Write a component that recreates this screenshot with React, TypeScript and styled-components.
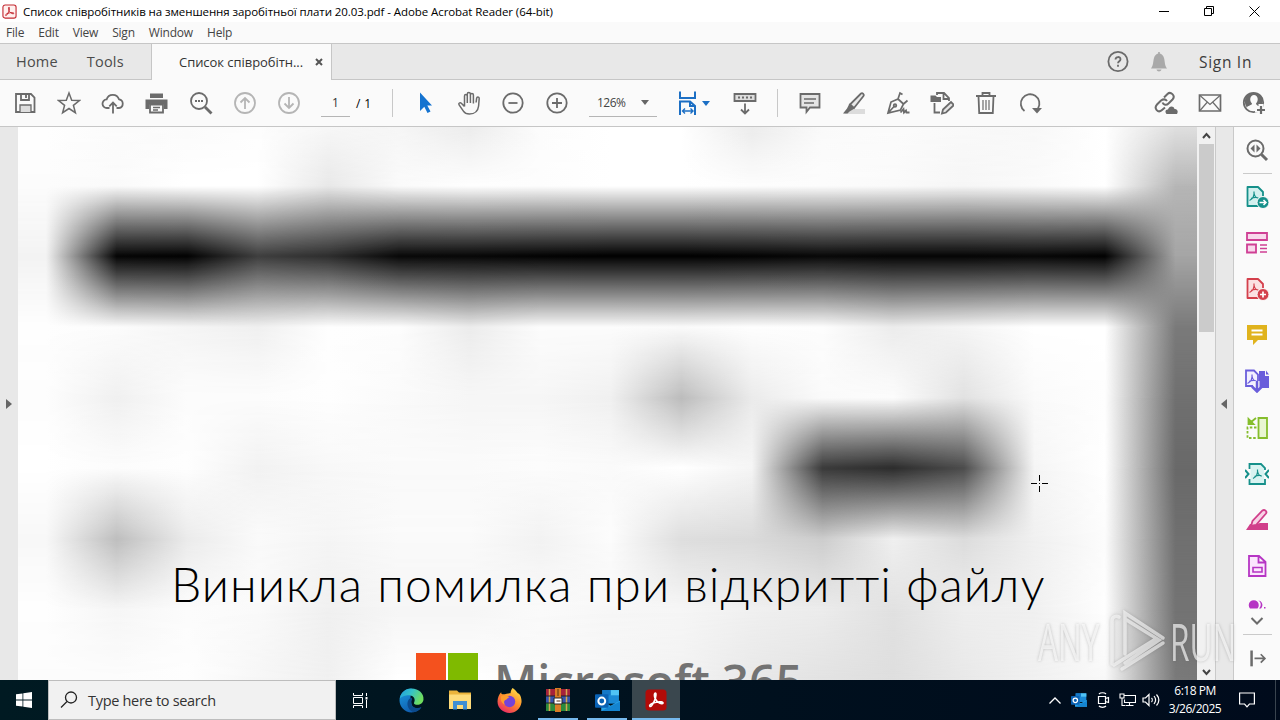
import React, { FC, ReactNode } from "react";

import styled, { createGlobalStyle } from "styled-components";

const GRAY = "#6b6b6b";

/* Brightness samples of the blurred scan, one list per row */
const SCAN_STEP_X = 70.6;
const SCAN_STEP_Y = 70.7;
const SCAN_FIRST_X = 28;
const SCAN_ROWS = [
  [255, 252, 250, 253, 250, 245, 232, 252, 255, 255, 232, 250, 252, 250, 248, 255, 232, 230],
  [252, 250, 255, 255, 232, 250, 254, 253, 255, 255, 253, 252, 250, 246, 250, 255, 182, 180],
  [243, 5, 2, 62, 45, 8, 7, 3, 0, 0, 3, 8, 5, 5, 7, 2, 165, 165],
  [254, 252, 245, 240, 254, 253, 236, 252, 252, 250, 254, 253, 236, 245, 255, 255, 122, 122],
  [253, 240, 252, 252, 254, 250, 246, 246, 240, 188, 235, 250, 252, 225, 250, 254, 112, 112],
  [255, 252, 254, 242, 248, 250, 250, 252, 250, 255, 245, 58, 44, 76, 245, 255, 105, 105],
  [248, 190, 235, 250, 245, 250, 250, 242, 252, 222, 218, 205, 240, 220, 240, 252, 112, 112],
  [254, 246, 252, 250, 240, 246, 246, 250, 247, 246, 240, 236, 225, 238, 240, 254, 115, 115],
  [252, 252, 254, 246, 240, 255, 255, 250, 246, 242, 232, 226, 222, 232, 240, 248, 122, 115],
];

const rowGradient = (row: number[]) =>
  `linear-gradient(90deg, ${row
    .map((v, i) => `rgb(${v},${v},${v}) ${SCAN_FIRST_X + i * SCAN_STEP_X}px`)
    .join(", ")})`;

interface IconProps {
  size?: number;
  color?: string;
  children: ReactNode;
}

const Icon: FC<IconProps> = ({ size = 24, color = GRAY, children }) => (
  <svg
    width={size}
    height={size}
    viewBox="0 0 24 24"
    fill="none"
    stroke={color}
    strokeWidth="1.8"
  >
    {children}
  </svg>
);

const SaveIcon = () => (
  <Icon>
    <path d="M3 3h15l3.500 3.500V21H3z" />
    <path d="M8 3v6h8V3M13 4v3" />
    <path d="M7 21v-7h11v7" fill="#ddd" strokeWidth="1.300" />
  </Icon>
);

const StarIcon = () => (
  <Icon>
    <path d="M12 2l2.700 7.200 7.700.3-6 4.800 2 7.400-6.400-4.200-6.400 4.200 2-7.400-6-4.800 7.700-.3z" strokeWidth="1.500" />
  </Icon>
);

const CloudIcon = () => (
  <Icon>
    <path d="M8.500 17H6a4.300 4.300 0 0 1-.4-8.600A6.500 6.500 0 0 1 18 8.300 4.400 4.400 0 0 1 18 17h-2.500" />
    <path d="M12 22.500V12M8.300 15.300L12 11.600l3.700 3.700" />
  </Icon>
);

const PrintIcon = () => (
  <Icon>
    <path d="M5 2.500h13V7H5z" fill={GRAY} stroke="none" />
    <path d="M.5 8.500h22V18H19v-4.500H4V18H.5z" fill={GRAY} stroke="none" />
    <path d="M5 13.500h13v8H5z" />
    <path d="M8 16.500h7M8 19h5" strokeWidth="1.300" />
  </Icon>
);

const FindIcon = () => (
  <Icon>
    <circle cx="10" cy="10" r="8" />
    <path d="M16 16l6.500 6.500" strokeWidth="2.800" />
    <path d="M6 10h2M9 10h2M12 10h2" strokeWidth="2" />
  </Icon>
);

const ArrowCircleIcon: FC<{ down?: boolean }> = ({ down }) => (
  <Icon color="#b5b5b5">
    <circle cx="12" cy="12" r="10" />
    <path d={down ? "M12 6v11M7.500 12.500L12 17l4.500-4.500" : "M12 18V7M7.500 11.500L12 7l4.500 4.500"} />
  </Icon>
);

const PointerIcon = () => (
  <Icon>
    <path d="M7 1.500v18.500l4.300-4.300 3.200 6.300 3-1.500-3.200-6.100H19z" fill="#1473d0" stroke="none" />
  </Icon>
);

const HandIcon = () => (
  <Icon>
    <path
      d="M7.500 15.500L4.300 12.200c-1.300-1.300-3.200.2-2.200 1.700l4.300 6.200c1.200 1.800 3 2.900 6 2.900 6 0 8.600-3 9.200-8l.6-7.500c.1-2-2.400-2.100-2.600-.2l-.5 4.200M7.500 15.500V5c0-2 2.700-2 2.800 0v7V3c0-2 3-2 3.100 0v9-8c0-2 3-2 3 0v8.500"
      strokeWidth="1.500"
    />
  </Icon>
);

const ZoomIcon: FC<{ plus?: boolean }> = ({ plus }) => (
  <Icon>
    <circle cx="12" cy="12" r="9.700" />
    <path d={plus ? "M7 12h10M12 7v10" : "M7.500 12h9"} />
  </Icon>
);

const FitIcon = () => (
  <Icon color="#1c6fc4">
    <path d="M3 .5V7h15V.5M3 24V10.500h10L18 15v9M13 10.500V15h5" strokeWidth="2" />
    <path d="M5.500 20h10.500M8 17.500L5.500 20 8 22.500M13.500 17.500L16 20l-2.500 2.500" strokeWidth="1.400" />
  </Icon>
);

const ScrollModeIcon = () => (
  <Icon>
    <path d="M1.500 3h21v7h-21z" fill="#ddd" />
    <path d="M5 6.500h14" strokeDasharray="2 2" strokeWidth="2" />
    <path d="M12 12.500v10M8 18.500l4 4 4-4" />
  </Icon>
);

const CommentIcon = () => (
  <Icon>
    <path d="M2.500 3h19v13.500H12L8.500 21v-4.500h-6z" fill="#e4e4e4" />
    <path d="M6 8h12M6 12h10" strokeWidth="1.400" />
  </Icon>
);

const HighlightIcon = () => (
  <Icon>
    <path d="M6 18h17v5H2z" fill="#dcdcdc" stroke="none" />
    <path d="M19 2.500c1.500-1 3.700 1 2.500 2.500L12 17l-4-3.500z" fill="#e8e8e8" />
    <path d="M7.500 12.500l-2.500 5L1 22.500h4.500l2-2 5-3z" fill={GRAY} stroke="none" />
  </Icon>
);

const SignIcon = () => (
  <Icon>
    <path d="M2 22l3-11 7-3 5.500 5-3 6zM2.500 21.500l6-6.500M12 8l2-6 2.500 1.500M12 8l5.500 5 4-3.500" strokeWidth="1.700" />
    <circle cx="9" cy="14.500" r="1.300" />
    <path d="M14.500 21.500l3-3.500.5 3.500 2-2 .5 2h3" />
  </Icon>
);

const EditPageIcon = () => (
  <Icon>
    <path d="M7 4V2h7l5 5v3M13.500 2v6H19M4.500 12v9.500H10" />
    <path d="M.5 4.500h5l1.500 1.500h4V11H.500z" fill={GRAY} stroke="none" />
    <path d="M12 22.500l1-4 8-7.500 3 3-8 7.500z" fill="#e4e4e4" />
  </Icon>
);

const TrashIcon = () => (
  <Icon>
    <path d="M2 5h20M8.500 5V2h7v3M4.500 5l.7 17h13.600l.7-17" />
    <path d="M9 9v10M12 9v10M15 9v10" strokeWidth="1.200" />
  </Icon>
);

const RotateIcon = () => (
  <Icon>
    <path d="M6.500 20A9.300 9.300 0 1 1 20 17.500" />
    <path d="M14 17l10 0-5 5.500z" fill={GRAY} stroke="none" />
  </Icon>
);

const LinkIcon = () => (
  <Icon>
    <path d="M10 6.500l3.500-3.500c3-3 8.500 1.500 5 5.500l-4 4c-2 2-5 1.500-6-1M13 10c-1.500-2-4-2-6-.5l-4 4c-3.500 4 1 9 5 5.500l3-2.500" strokeWidth="2" />
    <path d="M12.500 23c-2.500-3 0-5 1.500-4.500 1-3.500 5.500-4 6.500-.5 3-.5 4 3 2.500 5z" fill={GRAY} stroke="none" />
  </Icon>
);

const MailIcon = () => (
  <Icon>
    <path d="M1.500 4h21v16h-21z" strokeWidth="1.700" />
    <path d="M2 4.500l10 9 10-9M2 19.500l7-8M22 19.500l-7-8" strokeWidth="1.200" />
  </Icon>
);

const AddUserIcon = () => (
  <Icon>
    <circle cx="11.500" cy="11.500" r="9.700" />
    <path d="M4 5.500C8 .5 17 1 20.500 7v8H16c-1-1.500-2-1-2-2.500 3-3 2-8.500-2-8.500s-5 5.500-2 8.500c0 2-4.500 2-5 4-2-2-3-7-1-11z" fill={GRAY} stroke="none" />
    <path d="M19 13v12M13 19h12" stroke="#fafafa" strokeWidth="5" />
    <path d="M19 15v8M15 19h8" strokeWidth="2.200" />
  </Icon>
);

const PdfMark: FC<{ color: string; x?: number; y?: number }> = ({ color, x = 0, y = 0 }) => (
  <path
    transform={`translate(${x} ${y})`}
    d="M4.500 15.500c3-1.500 5-5 4.500-9M9 8c.5 3 2 5 4.500 5M6 13.500c2-1 4-1.300 6.500-1"
    stroke={color}
    strokeWidth="1.200"
  />
);

const PagePdf: FC<{ color: string; fill: string; children: ReactNode }> = ({ color, fill, children }) => (
  <Icon color={color}>
    <path d="M2.500 2h10.500L18 7v14H2.500z" fill={fill} strokeLinejoin="round" />
    <PdfMark color={color} />
    <circle cx="18" cy="17.500" r="6" fill={color} stroke="#fafafa" strokeWidth="1" />
    {children}
  </Icon>
);

const sideTools: ReactNode[] = [
  <PagePdf color="#15908a" fill="#d2f0ee">
    <path d="M14.500 17.500h6M18.500 15l2.500 2.500-2.500 2.500" stroke="#fff" strokeWidth="1.500" />
  </PagePdf>,
  <Icon color="#cf3f94">
    <path d="M2 2h20v7H2zM2 13.500h9v8H2z" fill="#f8d8ec" />
    <path d="M15 14h7M15 17.500h7M15 21h7" strokeWidth="1.400" />
  </Icon>,
  <PagePdf color="#d4404c" fill="#fbe0e2">
    <path d="M15 17.500h6M18 14.500v6" stroke="#fff" strokeWidth="1.700" />
  </PagePdf>,
  <Icon color="#e0b31d">
    <path d="M2 2h20v15H13l-5 5v-5H2z" fill="#e0b31d" stroke="none" />
    <path d="M6.500 7.500h11M6.500 11.500h11" stroke="#fff" strokeWidth="1.800" />
  </Icon>,
  <Icon color="#6a5edb">
    <path d="M14 2h6v5h4v12H14z" fill="#6a5edb" stroke="none" />
    <path d="M21 1.500l3 4h-3z" fill="#6a5edb" stroke="none" />
    <path d="M8 17H1V1.500h8l4 4V13" fill="#f2f0ff" />
    <PdfMark color="#6a5edb" x={-2} y={-1} />
    <path d="M12 12v10" stroke="#fafafa" strokeWidth="5" />
    <path d="M12 12v10M7 17.500l5 5 5-5" strokeWidth="2.500" />
  </Icon>,
  <Icon color="#85bd2c">
    <path d="M13.500 2h8.500v20h-8.500z" fill="#e9f6d2" />
    <path d="M11.500 11.500H2.500V22h9" strokeDasharray="2.500 1.700" />
    <path d="M3.500 3v5h5zM5.500 6.500L11 2" fill="#85bd2c" />
  </Icon>,
  <Icon color="#15908a">
    <path d="M5.500 2.500h10L19 6v15H5.500z" fill="#d8f3f1" stroke="none" />
    <path d="M4.500 7V2H16l4 4v2M4.500 17v5H20v-5" />
    <path d="M0 8l3.500 4L0 16M24 8l-3.500 4 3.500 4" strokeWidth="2" />
    <PdfMark color="#15908a" x={3.500} y={1} />
  </Icon>,
  <Icon color="#d13f8b">
    <path d="M1 22l4-6h6l4-1h8v7z" fill="#d13f8b" stroke="none" />
    <path d="M17.500 2.500c2-1.500 5 1 3.500 3L11 17l-5 1 1.500-5z" fill="#f8d3e6" />
  </Icon>,
  <Icon color="#b635c4">
    <path d="M4 2h10l6.500 6v14H4zM13.500 2v6.500h7" fill="#fbe6fd" />
    <path d="M8 13.500h9v4.500H8z" strokeWidth="1.600" />
  </Icon>,
];

const WinrarIcon = () => (
  <svg width="24" height="24" viewBox="0 0 24 24">
    <path d="M0 1h24v7H0z" fill="#a5223b" />
    <path d="M0 8h24v7H0z" fill="#3654ae" />
    <path d="M0 15h24v8H0z" fill="#2b8a3c" />
    <path d="M3.500 1v22M20.500 1v22" stroke="#d8a850" strokeWidth="1.500" />
    <path d="M0 8h24M0 15h24" stroke="#222" />
    <path d="M9 0h6v24H9z" fill="#d97c26" />
    <path d="M8 10h8v6H8z" fill="#fff" stroke="#222" />
    <path d="M10.500 13h4M12 1v7" stroke="#553010" />
  </svg>
);

const OutlookIcon: FC<{ size: number }> = ({ size }) => (
  <svg width={size} height={size} viewBox="0 0 24 24">
    <path d="M7 2h16v13H7z" fill="#1b8ad6" />
    <path d="M15 2h8v5h-8z" fill="#50c3f5" />
    <path d="M7 2h8v5H7z" fill="#1478c7" />
    <path d="M6 12l9 5 9-5v10H6z" fill="#2ba4e8" />
    <path d="M6 22l18-9v9z" fill="#1484d0" />
    <rect x="0" y="6" width="13" height="13" rx="1" fill="#0a62b4" />
    <circle cx="6.500" cy="12.500" r="3.300" fill="none" stroke="#fff" strokeWidth="1.900" />
  </svg>
);

const AcrobatIcon: FC<{ size: number; light?: boolean }> = ({ size, light }) => (
  <svg width={size} height={size} viewBox="0 0 24 24" fill="none">
    <rect
      x="1.500"
      y="1.500"
      width="21"
      height="21"
      rx="3.500"
      fill={light ? "#fff0ee" : "#b30b08"}
      stroke={light ? "#c42a32" : "none"}
      strokeWidth="1.800"
    />
    <path
      d="M6 18.500c-1.500-1.500 2-3.500 6-4.300 4-.9 7.500-.3 7 1-.7 1.700-6-.7-7.800-4.600-1.200-2.800-1-5.600 0-5.600 1.200 0 1 3.500-.7 7.500-1.500 3.500-3.300 6.500-4.500 6z"
      stroke={light ? "#c42a32" : "#fff"}
      strokeWidth="1.600"
    />
  </svg>
);

const EdgeIcon = () => (
  <svg width="25" height="25" viewBox="0 0 24 24">
    <defs>
      <linearGradient id="edgeTop" x1="0" y1="0" x2="1" y2="0.400">
        <stop offset="0" stopColor="#1f9fe0" />
        <stop offset="0.500" stopColor="#35c1c8" />
        <stop offset="1" stopColor="#6fdd5f" />
      </linearGradient>
      <linearGradient id="edgeLow" x1="0" y1="0" x2="0.500" y2="1">
        <stop offset="0" stopColor="#1b9de2" />
        <stop offset="1" stopColor="#0f5cae" />
      </linearGradient>
    </defs>
    <path d="M12 .5C5 .5.500 6 .500 12S5.500 23.500 12 23.500c4 0 7.500-2 9.500-5-4 2-9 .5-9.500-3.500L11 9z" fill="url(#edgeLow)" />
    <path d="M.7 10C2 3.500 7 .5 12 .500c7 0 12 5 11.500 10.500-.3 4-4 5.500-7 5-3-.5-2-2-1.500-3.500C15.500 8.500 12 6.500 8 7c-3.500.4-6 1.800-7.300 3z" fill="url(#edgeTop)" />
    <path d="M11 9.500c-4.500 2.500-4 11 3 13.800 3-.5 5.500-2 7.500-4.800-3 1.500-8 1-9.500-2.500-1.200-3 1-4 .5-6 0-.6-1-.8-1.500-.5z" fill="#0c4a8c" />
  </svg>
);

const FolderIcon = () => (
  <svg width="24" height="24" viewBox="0 0 24 24">
    <path d="M1 2.500h8l2 2h12V21H1z" fill="#eab33b" />
    <path d="M1 6.500h22V21H1z" fill="#fddb7a" />
    <path d="M5 13h14v8.500h-4V17H9v4.500H5z" fill="#3f8fd4" />
  </svg>
);

const FirefoxIcon = () => (
  <svg width="25" height="25" viewBox="0 0 24 24">
    <defs>
      <linearGradient id="fox" x1="0.800" y1="0" x2="0.200" y2="1">
        <stop offset="0" stopColor="#ffe14a" />
        <stop offset="0.500" stopColor="#ff8a2a" />
        <stop offset="1" stopColor="#e8226a" />
      </linearGradient>
    </defs>
    <path d="M15 0c4 3 4 4 5 5 2 0 4 5 3.500 9C22.500 20 18 24 12 24S.5 19.500.5 13C.5 9 2 6 4 4c0 2 1 2 2 2 2 0 5-1 7-1 0-2 1-4 2-5z" fill="url(#fox)" />
    <circle cx="12" cy="13" r="5.500" fill="#7543d8" />
    <path d="M4 8c3-1.500 6-.5 8 1-2 0-2 2-4 2.500C6.500 12 6.500 14 7.500 16 4 14.500 3 11 4 8z" fill="#ff9c2c" />
  </svg>
);

const WindowsIcon = () => (
  <svg width="16" height="16" viewBox="0 0 16 16" fill="#fff">
    <path d="M0 2.300l6.500-.9v6.100H0zM7.300 1.300L16 0v7.500H7.300zM0 8.400h6.500v6.200L0 13.700zM7.300 8.400H16V16l-8.700-1.300z" />
  </svg>
);

const Watermark = () => (
  <WatermarkBox>
    <WatermarkText $width={66}>ANY</WatermarkText>
    <svg width="58" height="66" viewBox="0 0 58 66" fill="none" stroke="rgba(255,255,255,.6)" strokeWidth="3.500">
      <path d="M17 46V5l38 25M55 35L14 61M4 56V13c0-4 4-6 7-4M17 11l34 21-34 23M6 57l40-25" strokeLinecap="round" />
    </svg>
    <WatermarkText $width={62}>RUN</WatermarkText>
  </WatermarkBox>
);

const App: FC = () => (
  <Screen>
    <GlobalStyle />
    <TitleBar>
      <AcrobatIcon size={15} light />
      <WindowTitle>
        Список співробітників на зменшення заробітньої плати 20.03.pdf - Adobe Acrobat Reader (64-bit)
      </WindowTitle>
      <WindowButtons>
        <svg width="11" height="11" stroke="#000"><path d="M0 5.500h10" /></svg>
        <svg width="11" height="11" stroke="#000" fill="none"><path d="M.5 2.500h7v7h-7zM2.500 2.500v-2h7v7h-2" /></svg>
        <svg width="11" height="11" stroke="#000"><path d="M.5.500l10 10M10.500.500l-10 10" /></svg>
      </WindowButtons>
    </TitleBar>

    <MenuBar>
      {["File", "Edit", "View", "Sign", "Window", "Help"].map((item) => (
        <span key={item}>{item}</span>
      ))}
    </MenuBar>

    <TabBar>
      <HomeTabs>
        <span>Home</span>
        <span>Tools</span>
      </HomeTabs>
      <DocumentTab>
        <span>Список співробітн...</span>
        <svg width="8" height="8" stroke="#555" strokeWidth="2"><path d="M1 1l6 6M7 1L1 7" /></svg>
      </DocumentTab>
      <Account>
        <Icon>
          <circle cx="12" cy="11.500" r="9.600" />
          <path d="M9.500 9.500c0-3.300 5-3.200 5-.3 0 2-2.500 2-2.500 4.100M12 14.800v2" />
        </Icon>
        <Icon color="none">
          <path d="M4 18.500c2.500-3 2-7 3-10.500.6-2.500 2.500-4 4.200-4.500V2h1.600v1.500c1.700.5 3.600 2 4.200 4.500 1 3.500.5 7.500 3 10.500zM9.500 19.500h5c-.5 2.500-4.500 2.500-5 0z" fill="#a9a9a9" />
        </Icon>
        <SignIn>Sign In</SignIn>
      </Account>
    </TabBar>

    <Toolbar>
      <ToolGroup>
        <Tool><SaveIcon /></Tool>
        <Tool><StarIcon /></Tool>
        <Tool><CloudIcon /></Tool>
        <Tool><PrintIcon /></Tool>
        <Tool><FindIcon /></Tool>
        <Tool><ArrowCircleIcon /></Tool>
        <Tool><ArrowCircleIcon down /></Tool>
      </ToolGroup>
      <PageInput>1</PageInput>
      <PageTotal>/ 1</PageTotal>
      <ToolDivider />
      <ToolGroup>
        <Tool><PointerIcon /></Tool>
        <Tool><HandIcon /></Tool>
        <Tool><ZoomIcon /></Tool>
        <Tool><ZoomIcon plus /></Tool>
      </ToolGroup>
      <ZoomSelect>
        126%
        <Caret />
      </ZoomSelect>
      <FitTool>
        <FitIcon />
        <Caret $color="#1c6fc4" />
      </FitTool>
      <Tool><ScrollModeIcon /></Tool>
      <ToolDivider $wide />
      <ToolGroup>
        <Tool><CommentIcon /></Tool>
        <Tool><HighlightIcon /></Tool>
        <Tool><SignIcon /></Tool>
        <Tool><EditPageIcon /></Tool>
        <Tool><TrashIcon /></Tool>
        <Tool><RotateIcon /></Tool>
      </ToolGroup>
      <ShareGroup>
        <Tool><LinkIcon /></Tool>
        <Tool><MailIcon /></Tool>
        <Tool><AddUserIcon /></Tool>
      </ShareGroup>
    </Toolbar>

    <Workspace>
      <LeftGutter>
        <svg width="6" height="12" fill="#666"><path d="M0 1l6 5-6 5z" /></svg>
      </LeftGutter>
      <Page>
        <Scan>
          {SCAN_ROWS.slice(0, -1).map((row, i) => (
            <ScanBand key={i} $from={rowGradient(row)} $to={rowGradient(SCAN_ROWS[i + 1])} />
          ))}
        </Scan>
        <PageContent>
          <ErrorTitle>Виникла помилка при відкритті файлу</ErrorTitle>
          <Brand>
            <BrandSquares>
              <Square $color="#f4511e" />
              <Square $color="#7fba00" />
            </BrandSquares>
            <BrandName>Microsoft 365</BrandName>
          </Brand>
        </PageContent>
        <Crosshair width="19" height="19" viewBox="0 0 19 19" stroke="#000">
          <path d="M1 9.500h6M12 9.500h6M9.500 1v6M9.500 12v6M9 9.500h1" />
        </Crosshair>
      </Page>
      <Scrollbar>
        <svg width="9" height="17" stroke="#444" strokeWidth="2" fill="none"><path d="M1 11l3.500-4L8 11" /></svg>
        <Thumb />
        <svg width="9" height="17" stroke="#444" strokeWidth="2" fill="none"><path d="M1 7l3.500 4L8 7" /></svg>
      </Scrollbar>
      <RightGutter>
        <svg width="6" height="12" fill="#666"><path d="M6 1L0 6l6 5z" /></svg>
      </RightGutter>
      <ToolsPane>
        <PaneTop>
          <Icon>
            <circle cx="10.500" cy="10.500" r="8" strokeWidth="2" />
            <path d="M16.500 16.500l5.500 5.500" strokeWidth="3" />
            <path d="M9.500 6.500v8L5.500 10.500zM11.500 6.500v8l4-4z" fill={GRAY} stroke="none" />
          </Icon>
        </PaneTop>
        <PaneLine />
        <PaneTools>
          {sideTools.map((tool, i) => (
            <PaneTool key={i}>{tool}</PaneTool>
          ))}
        </PaneTools>
        <PaneMore>
          <svg width="24" height="9" viewBox="0 0 24 9" fill="#b635c4">
            <path d="M5 8.500a5 5 0 1 1 7.500 0z" />
            <path d="M13 .5c3.500 1 3.500 6 1 8h2c3-3 1-8-3-8zM19 7h1.500v1.500H19z" />
          </svg>
          <svg width="14" height="8" fill="none" stroke={GRAY} strokeWidth="2"><path d="M1.500 1L7 6.500 12.500 1" /></svg>
        </PaneMore>
        <PaneLine $last />
        <Icon size={20}>
          <path d="M5.500 3v19" strokeWidth="3" />
          <path d="M9 12.500h12M16.500 7.500l5 5-5 5" strokeWidth="2" />
        </Icon>
      </ToolsPane>
      <Watermark />
    </Workspace>

    <Taskbar>
      <Start><WindowsIcon /></Start>
      <Search>
        <svg width="18" height="18" fill="none" stroke="#222" strokeWidth="1.300">
          <circle cx="11" cy="6.500" r="5.500" />
          <path d="M7 10.500L1 16.500" />
        </svg>
        <span>Type here to search</span>
      </Search>
      <TaskItem>
        <svg width="17" height="17" fill="none" stroke="#fff">
          <path d="M1.500 1v2.500h9V1M1.500 16v-2.500h9V16M1.500 5.500h9v6h-9zM14.500 1v3M14.500 8v8" />
          <path d="M13.500 5h2v2.500h-2z" fill="#fff" stroke="none" />
        </svg>
      </TaskItem>
      <PinnedApps>
        <TaskItem><EdgeIcon /></TaskItem>
        <TaskItem><FolderIcon /></TaskItem>
        <TaskItem><FirefoxIcon /></TaskItem>
        <TaskItem $line={40}><WinrarIcon /></TaskItem>
        <TaskItem $line={40}><OutlookIcon size={25} /></TaskItem>
        <TaskItem $line={48} $active><AcrobatIcon size={24} /></TaskItem>
      </PinnedApps>
      <Tray>
        <TrayItem>
          <svg width="12" height="7" fill="none" stroke="#fff" strokeWidth="1.300"><path d="M.5 6.500L6 1l5.500 5.500" /></svg>
        </TrayItem>
        <TrayItem><OutlookIcon size={16} /></TrayItem>
        <TrayItem>
          <svg width="14" height="18" viewBox="0 0 14 18" fill="none" stroke="#fff" strokeWidth="1.200">
            <path d="M2.500 5.500h7v7h-7zM9.500 7.500l3-1v5l-3-1M3 3c1.500-1.700 5.500-1.700 7 0M3 15c1.500 1.700 5.500 1.700 7 0" />
          </svg>
        </TrayItem>
        <TrayItem>
          <svg width="17" height="16" fill="none" stroke="#fff" strokeWidth="1.100">
            <path d="M5.500 3.500h11v7h-11v-3M10.500 10.500v3M6.500 13.500h8M1 2h4v4H1zM3 6v7.500h3" />
          </svg>
        </TrayItem>
        <TrayItem>
          <svg width="18" height="16" fill="none" stroke="#fff" strokeWidth="1.200">
            <path d="M1 6h2.500L7 2.500v11L3.500 10H1zM9.500 6c1 1 1 3 0 4M12 4c2 2.500 2 5.500 0 8M14.500 2.500c3 3.500 3 7.500 0 11" />
          </svg>
        </TrayItem>
      </Tray>
      <Clock>
        <span>6:18 PM</span>
        <span>3/26/2025</span>
      </Clock>
      <Notifications>
        <svg width="16" height="16" fill="none" stroke="#fff" strokeWidth="1.200"><path d="M.6 1h14.800v11h-5L8 14.800 5.600 12h-5z" /></svg>
      </Notifications>
    </Taskbar>
  </Screen>
);

export default App;

const GlobalStyle = createGlobalStyle`
  * {
    box-sizing: border-box;
  }

  body {
    margin: 0;
    overflow: hidden;
    font-family: "Open Sans", "Noto Sans", sans-serif;
  }

  svg {
    display: block;
    flex: none;
  }
`;

const Screen = styled.div`
  display: flex;
  flex-direction: column;
  width: 1280px;
  height: 720px;
  overflow: hidden;
  background: #fafafa;
  white-space: nowrap;
`;

const TitleBar = styled.div`
  display: flex;
  align-items: center;
  height: 22px;
  padding-left: 2px;
  background: #fff;
`;

const WindowTitle = styled.span`
  margin-left: 6px;
  font-size: 11.5px;
  letter-spacing: -0.08px;
  color: #000;
`;

const WindowButtons = styled.div`
  display: flex;
  gap: 34px;
  margin-left: auto;
  padding-right: 20px;
`;

const MenuBar = styled.div`
  display: flex;
  align-items: center;
  gap: 14px;
  height: 21px;
  padding-left: 6px;
  font-size: 12px;
  letter-spacing: -0.2px;
  color: #444;
`;

const TabBar = styled.div`
  display: flex;
  height: 37px;
  background: #e8e8e8;
  border-top: 1px solid #c6c6c6;
  border-bottom: 1px solid #c6c6c6;
`;

const HomeTabs = styled.div`
  display: flex;
  align-items: center;
  gap: 29px;
  width: 151px;
  padding-left: 16px;
  font-size: 14.5px;
  letter-spacing: 0.2px;
  color: #4b4b4b;
`;

const DocumentTab = styled.div`
  display: flex;
  align-items: center;
  justify-content: space-between;
  width: 181px;
  height: 36px;
  padding: 0 8px 0 27px;
  font-size: 13px;
  letter-spacing: -0.05px;
  color: #333;
  background: #fafafa;
  border-left: 1px solid #c6c6c6;
  border-right: 1px solid #c6c6c6;
`;

const Account = styled.div`
  display: flex;
  align-items: center;
  gap: 17px;
  margin-left: auto;
  padding-right: 26px;
`;

const SignIn = styled.span`
  width: 55px;
  margin-left: 11px;
  font-size: 15.5px;
  letter-spacing: 0.7px;
  color: #3c3c3c;
`;

const Toolbar = styled.div`
  display: flex;
  align-items: center;
  height: 47px;
  padding: 0 4px 0 3px;
  font-size: 12px;
  border-bottom: 1px solid #c6c6c6;
`;

const ToolGroup = styled.div`
  display: flex;
`;

const ShareGroup = styled(ToolGroup)`
  margin-left: auto;
`;

const Tool = styled.div`
  display: flex;
  justify-content: center;
  width: 44px;
`;

const PageInput = styled.div`
  width: 29px;
  height: 27px;
  margin-left: 10px;
  line-height: 26px;
  text-align: center;
  color: #333;
  border-bottom: 1px solid #b5b5b5;
`;

const PageTotal = styled.span`
  width: 36px;
  padding-left: 6px;
  letter-spacing: 0.4px;
`;

const ToolDivider = styled.div<{ $wide?: boolean }>`
  width: 1px;
  height: 28px;
  margin: 0 10px 0 ${({ $wide }) => ($wide ? 10 : 6)}px;
  background: #c8c8c8;
`;

const Caret = styled.i<{ $color?: string }>`
  border: 4px solid transparent;
  border-top: 5px solid ${({ $color }) => $color || "#666"};
  border-bottom: 0;
`;

const ZoomSelect = styled.div`
  display: flex;
  align-items: center;
  justify-content: space-between;
  width: 68px;
  height: 27px;
  margin-left: 10px;
  padding: 0 8px;
  letter-spacing: -0.5px;
  color: #444;
  border-bottom: 1px solid #b5b5b5;
`;

const FitTool = styled.div`
  display: flex;
  align-items: center;
  gap: 1px;
  width: 46px;
  margin-left: 20px;
`;

const Workspace = styled.div`
  position: relative;
  display: flex;
  height: 553px;
`;

const LeftGutter = styled.div`
  display: flex;
  align-items: center;
  justify-content: center;
  width: 18px;
  background: #e8e8e8;
`;

const Page = styled.div`
  position: relative;
  width: 1179px;
  overflow: hidden;
`;

const Scan = styled.div`
  position: absolute;
  inset: -12px 0 0;
`;

const ScanBand = styled.div<{ $from: string; $to: string }>`
  height: ${SCAN_STEP_Y}px;
  background: ${({ $from }) => $from};

  &::after {
    content: "";
    display: block;
    height: 100%;
    background: ${({ $to }) => $to};
    mask-image: linear-gradient(transparent, #000);
  }
`;

const PageContent = styled.div`
  position: relative;
  padding-top: 426px;
`;

const ErrorTitle = styled.h1`
  margin: 0 0 0 153px;
  font-family: Lato, "Open Sans", sans-serif;
  font-size: 48px;
  font-weight: 300;
  line-height: 62px;
  letter-spacing: 1.07px;
  color: #000;
`;

const Brand = styled.div`
  display: flex;
  height: 27px;
  margin: 38px 0 0 398px;
`;

const BrandSquares = styled.div`
  display: flex;
  gap: 2px;
`;

const Square = styled.div<{ $color: string }>`
  width: 30px;
  height: 30px;
  background: ${({ $color }) => $color};
`;

const BrandName = styled.span`
  margin-left: 16px;
  font-size: 47px;
  font-weight: 600;
  line-height: 57px;
  color: #737373;
`;

const Crosshair = styled.svg`
  position: absolute;
  left: 1012px;
  top: 347px;
`;

const Scrollbar = styled.div`
  display: flex;
  flex-direction: column;
  align-items: center;
  width: 18px;
  padding: 0 1px 0 2px;
  background: #f1f1f1;

  > :last-child {
    margin-top: auto;
  }
`;

const Thumb = styled.div`
  width: 15px;
  height: 188px;
  background: #cbcbcb;
`;

const RightGutter = styled.div`
  display: flex;
  align-items: center;
  justify-content: center;
  width: 19px;
  padding-right: 1px;
  background: #e8e8e8;
  border-left: 1px solid #c9c9c9;
  border-right: 1px solid #c9c9c9;
`;

const ToolsPane = styled.div`
  display: flex;
  flex-direction: column;
  align-items: center;
  width: 46px;
  background: #fafafa;
`;

const PaneTop = styled.div`
  padding: 11px 0;
`;

const PaneLine = styled.div<{ $last?: boolean }>`
  flex: none;
  width: 29px;
  height: 1px;
  margin: ${({ $last }) => ($last ? "9px 0 13px" : "0")};
  background: #cacaca;
`;

const PaneTools = styled.div`
  display: flex;
  flex-direction: column;
  padding-bottom: 11px;
`;

const PaneTool = styled.div`
  display: flex;
  align-items: center;
  height: 46.1px;
`;

const PaneMore = styled.div`
  display: flex;
  flex-direction: column;
  align-items: center;
  gap: 8px;
`;

const WatermarkBox = styled.div`
  position: absolute;
  left: 1038px;
  top: 481px;
  display: flex;
  align-items: center;
  gap: 4px;
  filter: drop-shadow(0 0 1.5px rgba(90, 90, 90, 0.5));
`;

const WatermarkText = styled.span<{ $width: number }>`
  width: ${({ $width }) => $width}px;
  font-size: 51px;
  line-height: 64px;
  color: rgba(255, 255, 255, 0.65);
  transform: scaleX(0.62);
  transform-origin: left;
`;

const Taskbar = styled.div`
  display: flex;
  height: 40px;
  color: #fff;
  background: linear-gradient(90deg, #001a22, #00101e 60%, #000b1c);
`;

const Start = styled.div`
  display: flex;
  align-items: center;
  justify-content: center;
  width: 48px;
`;

const Search = styled.div`
  display: flex;
  align-items: center;
  gap: 10px;
  width: 288px;
  padding-left: 11px;
  font-size: 14.5px;
  letter-spacing: -0.3px;
  color: #333;
  background: #f1f1f1;
  border: 1px solid #bdbdbd;
`;

const PinnedApps = styled.div`
  display: flex;
  gap: 1px;
  margin-left: 3px;
`;

const TaskItem = styled.div<{ $line?: number; $active?: boolean }>`
  display: flex;
  align-items: center;
  justify-content: center;
  width: 48px;
  background: linear-gradient(#76b9ed, #76b9ed) bottom / ${({ $line = 0 }) => $line}px 2px no-repeat
    ${({ $active }) => ($active ? "#3a474e" : "transparent")};
`;

const Tray = styled.div`
  display: flex;
  margin-left: auto;
`;

const TrayItem = styled.div`
  display: flex;
  align-items: center;
  justify-content: center;
  width: 24px;
`;

const Clock = styled.div`
  display: flex;
  flex-direction: column;
  align-items: center;
  justify-content: center;
  width: 64px;
  font-size: 12px;
  line-height: 18px;
  letter-spacing: -0.5px;
`;

const Notifications = styled.div`
  display: flex;
  align-items: center;
  width: 49px;
  margin-right: 4px;
  padding-left: 12px;
  border-right: 1px solid #39444f;
`;
